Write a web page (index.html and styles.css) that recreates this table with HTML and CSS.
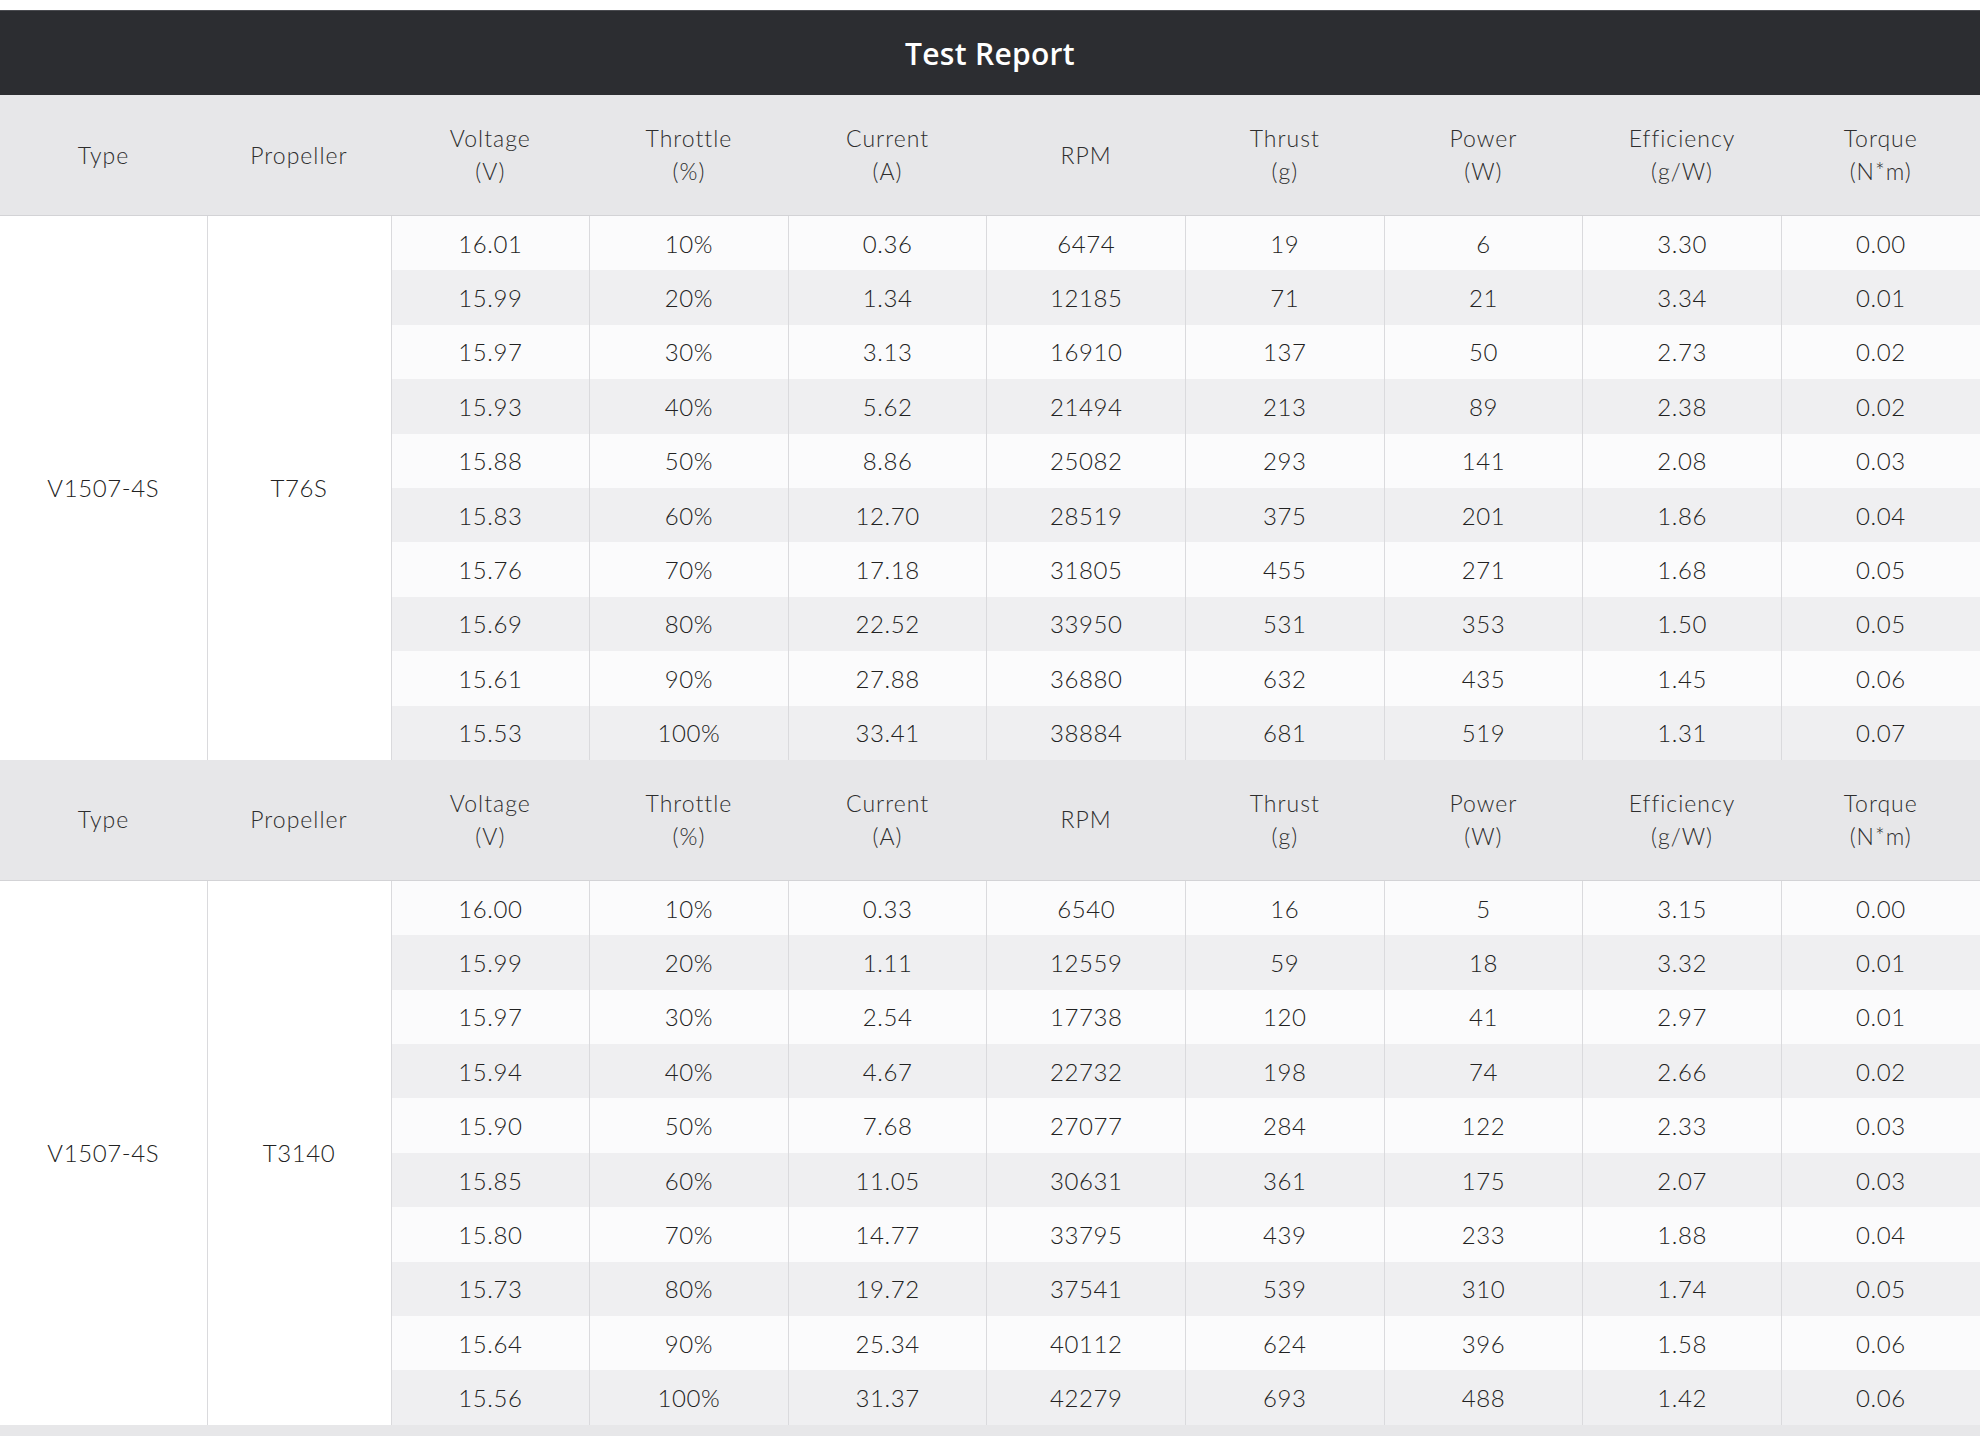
FILE: index.html
```html
<!DOCTYPE html>
<html lang="en">
<head>
<meta charset="utf-8">
<title>Test Report</title>
<link rel="stylesheet" href="styles.css">
</head>
<body>
<div class="report">
  <div class="title-bar">Test Report</div>

  <table class="grid">
    <colgroup><col class="c-type"><col class="c-prop"><col><col><col><col><col><col><col><col></colgroup>
    <thead>
      <tr>
        <th>Type</th><th>Propeller</th><th>Voltage<br>(V)</th><th>Throttle<br>(%)</th><th>Current<br>(A)</th><th>RPM</th><th>Thrust<br>(g)</th><th>Power<br>(W)</th><th>Efficiency<br>(g/W)</th><th>Torque<br>(N*m)</th>
      </tr>
    </thead>
    <tbody>
      <tr><td class="span" rowspan="10">V1507-4S</td><td class="span" rowspan="10">T76S</td><td>16.01</td><td>10%</td><td>0.36</td><td>6474</td><td>19</td><td>6</td><td>3.30</td><td>0.00</td></tr>
      <tr><td>15.99</td><td>20%</td><td>1.34</td><td>12185</td><td>71</td><td>21</td><td>3.34</td><td>0.01</td></tr>
      <tr><td>15.97</td><td>30%</td><td>3.13</td><td>16910</td><td>137</td><td>50</td><td>2.73</td><td>0.02</td></tr>
      <tr><td>15.93</td><td>40%</td><td>5.62</td><td>21494</td><td>213</td><td>89</td><td>2.38</td><td>0.02</td></tr>
      <tr><td>15.88</td><td>50%</td><td>8.86</td><td>25082</td><td>293</td><td>141</td><td>2.08</td><td>0.03</td></tr>
      <tr><td>15.83</td><td>60%</td><td>12.70</td><td>28519</td><td>375</td><td>201</td><td>1.86</td><td>0.04</td></tr>
      <tr><td>15.76</td><td>70%</td><td>17.18</td><td>31805</td><td>455</td><td>271</td><td>1.68</td><td>0.05</td></tr>
      <tr><td>15.69</td><td>80%</td><td>22.52</td><td>33950</td><td>531</td><td>353</td><td>1.50</td><td>0.05</td></tr>
      <tr><td>15.61</td><td>90%</td><td>27.88</td><td>36880</td><td>632</td><td>435</td><td>1.45</td><td>0.06</td></tr>
      <tr><td>15.53</td><td>100%</td><td>33.41</td><td>38884</td><td>681</td><td>519</td><td>1.31</td><td>0.07</td></tr>
    </tbody>
  </table>

  <table class="grid">
    <colgroup><col class="c-type"><col class="c-prop"><col><col><col><col><col><col><col><col></colgroup>
    <thead>
      <tr>
        <th>Type</th><th>Propeller</th><th>Voltage<br>(V)</th><th>Throttle<br>(%)</th><th>Current<br>(A)</th><th>RPM</th><th>Thrust<br>(g)</th><th>Power<br>(W)</th><th>Efficiency<br>(g/W)</th><th>Torque<br>(N*m)</th>
      </tr>
    </thead>
    <tbody>
      <tr><td class="span" rowspan="10">V1507-4S</td><td class="span" rowspan="10">T3140</td><td>16.00</td><td>10%</td><td>0.33</td><td>6540</td><td>16</td><td>5</td><td>3.15</td><td>0.00</td></tr>
      <tr><td>15.99</td><td>20%</td><td>1.11</td><td>12559</td><td>59</td><td>18</td><td>3.32</td><td>0.01</td></tr>
      <tr><td>15.97</td><td>30%</td><td>2.54</td><td>17738</td><td>120</td><td>41</td><td>2.97</td><td>0.01</td></tr>
      <tr><td>15.94</td><td>40%</td><td>4.67</td><td>22732</td><td>198</td><td>74</td><td>2.66</td><td>0.02</td></tr>
      <tr><td>15.90</td><td>50%</td><td>7.68</td><td>27077</td><td>284</td><td>122</td><td>2.33</td><td>0.03</td></tr>
      <tr><td>15.85</td><td>60%</td><td>11.05</td><td>30631</td><td>361</td><td>175</td><td>2.07</td><td>0.03</td></tr>
      <tr><td>15.80</td><td>70%</td><td>14.77</td><td>33795</td><td>439</td><td>233</td><td>1.88</td><td>0.04</td></tr>
      <tr><td>15.73</td><td>80%</td><td>19.72</td><td>37541</td><td>539</td><td>310</td><td>1.74</td><td>0.05</td></tr>
      <tr><td>15.64</td><td>90%</td><td>25.34</td><td>40112</td><td>624</td><td>396</td><td>1.58</td><td>0.06</td></tr>
      <tr><td>15.56</td><td>100%</td><td>31.37</td><td>42279</td><td>693</td><td>488</td><td>1.42</td><td>0.06</td></tr>
    </tbody>
  </table>
  <div class="footer-strip"></div>
</div>
</body>
</html>
```
FILE: styles.css
```css
html, body {
  margin: 0;
  padding: 0;
  background: #ffffff;
}

body {
  font-family: Lato, "Liberation Sans", Arial, sans-serif;
  color: #2a2a2a;
}

.report {
  padding-top: 10px;
}

.title-bar {
  box-sizing: border-box;
  height: 85px;
  background: #2c2d31;
  border-top: 1px solid #4a4b50;
  color: #ffffff;
  display: flex;
  align-items: center;
  justify-content: center;
  font-family: "Open Sans", Lato, sans-serif;
  font-size: 30px;
  font-weight: 600;
  letter-spacing: 0.3px;
}

.grid {
  width: 100%;
  border-collapse: collapse;
  border-spacing: 0;
  table-layout: fixed;
}

.c-type { width: 207px; }
.c-prop { width: 184px; }

.grid th {
  height: 120px;
  padding: 0;
  background: #e7e7e9;
  border-bottom: 1px solid #d3d3d6;
  font-weight: 300;
  font-size: 23px;
  line-height: 33px;
  letter-spacing: 1px;
  color: #2e2e2e;
  text-align: center;
  vertical-align: middle;
}

.grid td {
  height: 54.4px;
  padding: 0;
  font-size: 24px;
  font-weight: 300;
  letter-spacing: 0.6px;
  color: #222222;
  text-align: center;
  vertical-align: middle;
  background: #fbfbfc;
  border-left: 1px solid #dadadd;
}

.grid tbody tr:nth-child(even) td {
  background: #efeff1;
}

.grid td.span {
  background: #ffffff;
}

.grid tbody tr td:first-child.span {
  border-left: none;
}

.footer-strip {
  height: 12px;
  background: #e7e7e9;
}
```
